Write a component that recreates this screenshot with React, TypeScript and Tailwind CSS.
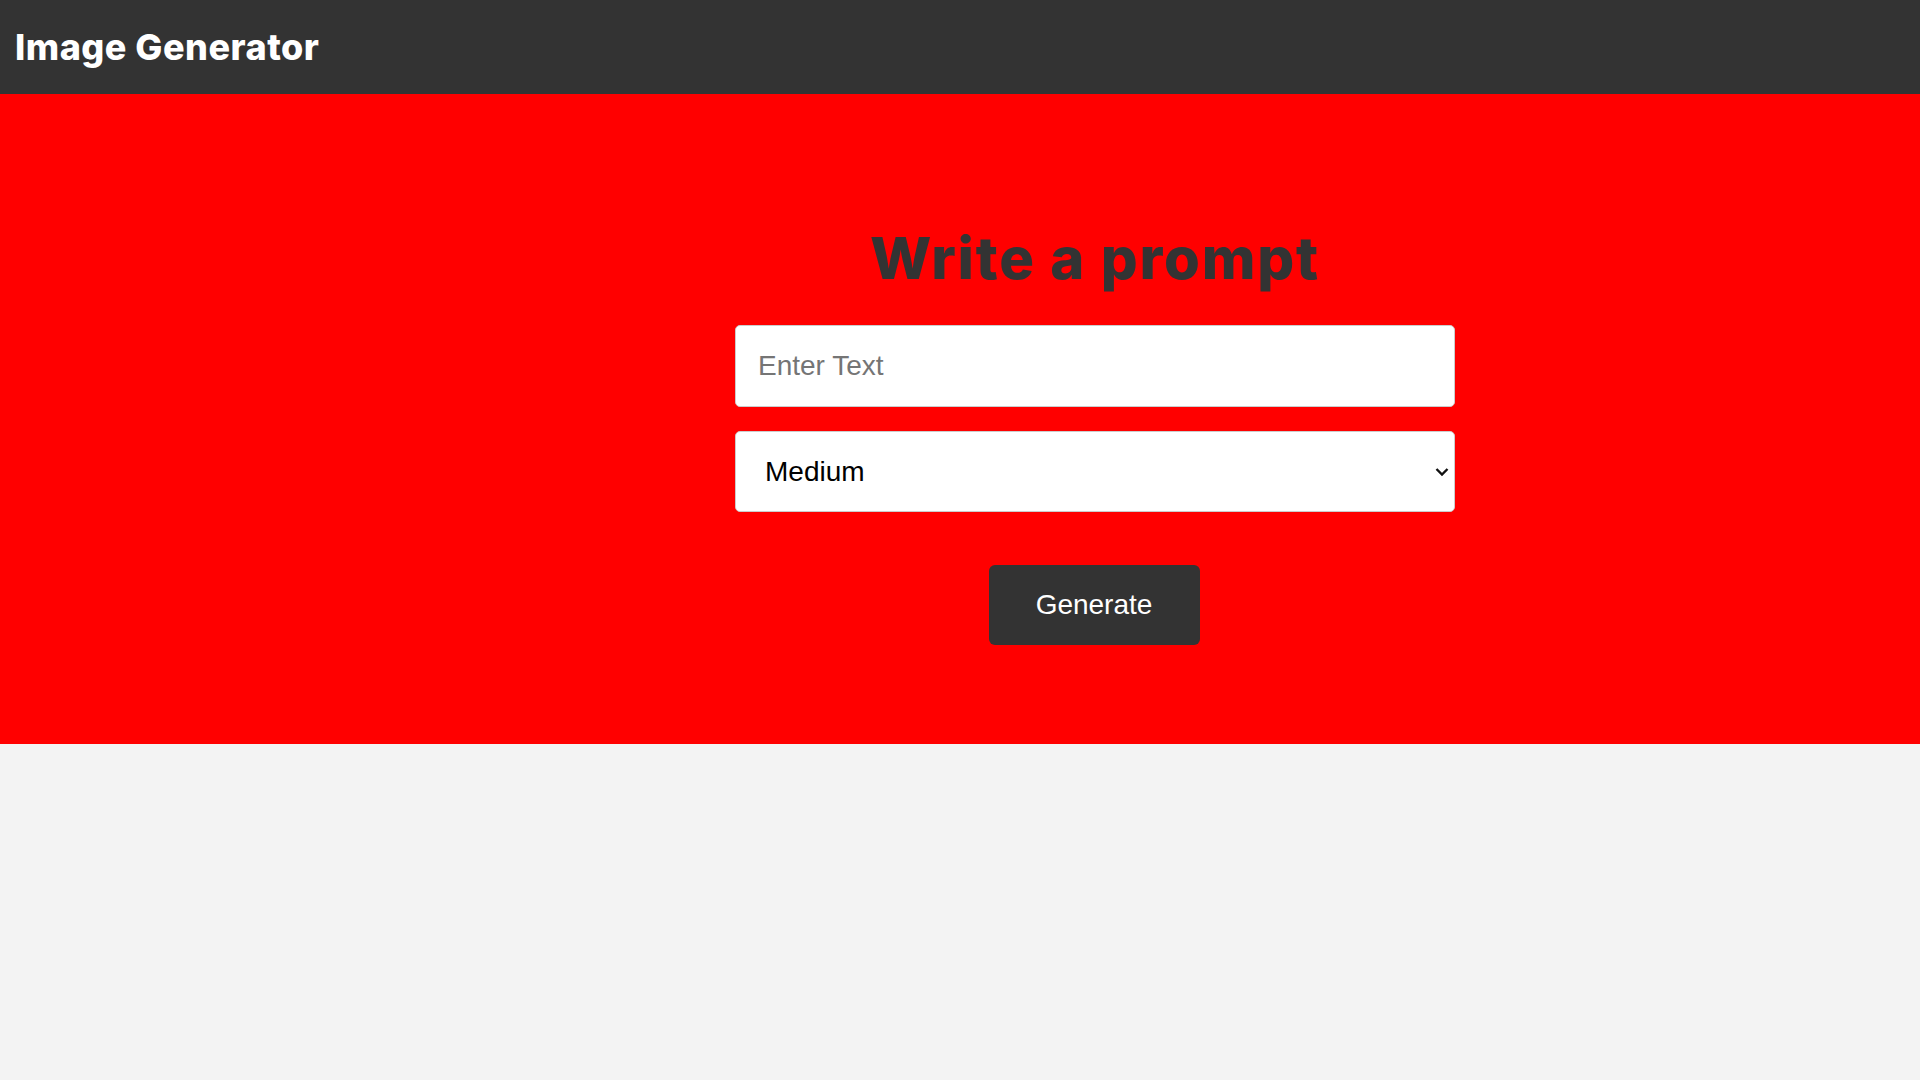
import { useState } from "react"

export default function App() {
  const [prompt, setPrompt] = useState("")
  const [size, setSize] = useState("medium")

  return (
    <div className="flex flex-col min-h-screen bg-[#f3f3f3] font-['Liberation_Sans',Arial,sans-serif]">
      <header className="h-[94px] bg-[#333333] flex items-center px-[15px]">
        <h1 className="text-[36px] font-extrabold text-white tracking-[0.5px] font-['Inter',sans-serif] leading-none">
          Image Generator
        </h1>
      </header>

      <main className="bg-[#ff0000] h-[650px] pl-[270px]">
        <div className="flex flex-col items-center pt-[135px]">
          <h2 className="text-[58px] leading-none font-extrabold text-[#333333] font-['Inter',sans-serif] tracking-[1.8px]">
            Write a prompt
          </h2>

          <form className="w-[720px] flex flex-col items-center mt-[38px]" onSubmit={(e) => e.preventDefault()}>
            <input
              type="text"
              value={prompt}
              onChange={(e) => setPrompt(e.target.value)}
              placeholder="Enter Text"
              className="w-full h-[82px] bg-white border border-[#cccccc] rounded-[5px] px-[22px] text-[28px] text-black placeholder:text-[#757575] outline-none"
            />
            <div className="relative w-full mt-[24px]">
              <select
                value={size}
                onChange={(e) => setSize(e.target.value)}
                className="w-full h-[81px] appearance-none bg-white border border-[#cccccc] rounded-[5px] pl-[29px] pr-[30px] text-[28px] text-black outline-none"
              >
                <option value="small">Small</option>
                <option value="medium">Medium</option>
                <option value="large">Large</option>
              </select>
              <svg
                className="absolute right-[6px] top-1/2 -translate-y-1/2 pointer-events-none"
                width="14"
                height="9"
                viewBox="0 0 14 9"
                fill="none"
              >
                <path d="M1.5 1.5 L7 7 L12.5 1.5" stroke="#111" strokeWidth="2.4" />
              </svg>
            </div>
            <button
              type="submit"
              className="mt-[53px] w-[211px] h-[80px] bg-[#333333] text-white text-[28px] rounded-[6px] -ml-[2px]"
            >
              Generate
            </button>
          </form>
        </div>
      </main>
    </div>
  )
}
